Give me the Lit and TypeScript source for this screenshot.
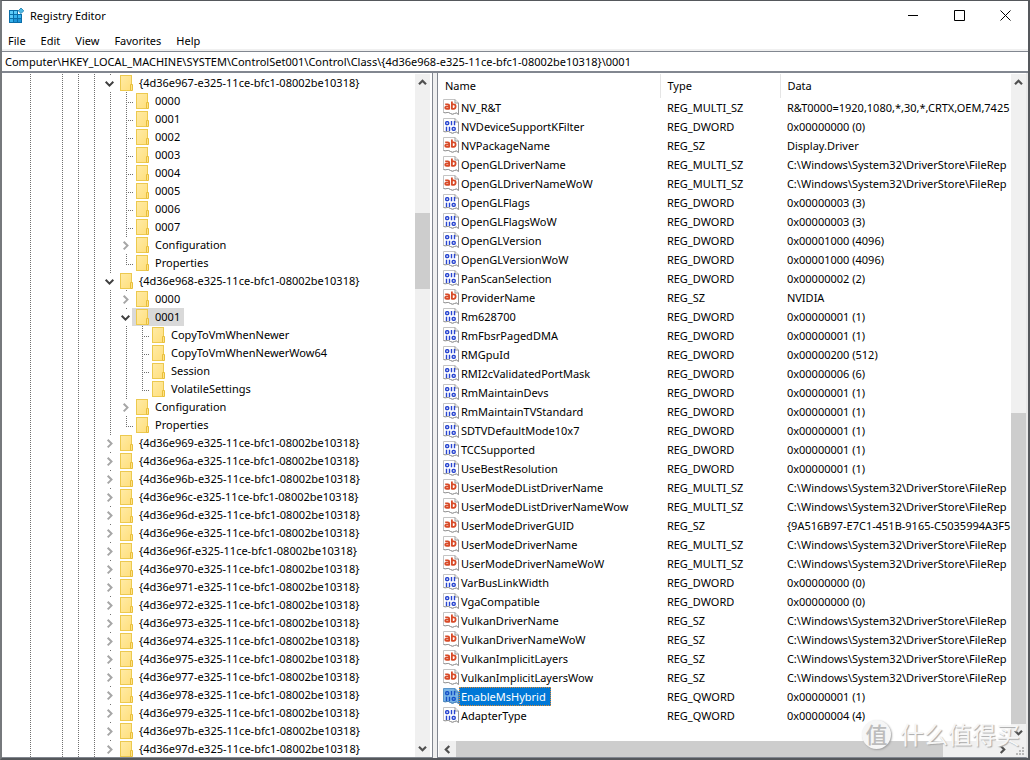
import { LitElement, html, css, svg, nothing } from "lit";
import { customElement, property } from "lit/decorators.js";

type Kind = "closed" | "open" | "leaf";
interface Key { name: string; depth: number; kind: Kind; last?: boolean; selected?: boolean; }
interface Value { name: string; type: string; data: string; selected?: boolean; }

const guid = (id: string) => `{4d36e${id}-e325-11ce-bfc1-08002be10318}`;
const top = (id: string, kind: Kind = "closed"): Key => ({ name: guid(id), depth: 0, kind });
const sub = (name: string, kind: Kind = "leaf", last = false): Key => ({ name, depth: 1, kind, last });

const KEYS: Key[] = [
  top("967", "open"),
  ...["0000", "0001", "0002", "0003", "0004", "0005", "0006", "0007"].map((n) => sub(n)),
  sub("Configuration", "closed"),
  sub("Properties", "leaf", true),
  top("968", "open"),
  sub("0000", "closed"),
  { ...sub("0001", "open"), selected: true },
  { name: "CopyToVmWhenNewer", depth: 2, kind: "leaf" },
  { name: "CopyToVmWhenNewerWow64", depth: 2, kind: "leaf" },
  { name: "Session", depth: 2, kind: "leaf" },
  { name: "VolatileSettings", depth: 2, kind: "leaf", last: true },
  sub("Configuration", "closed"),
  sub("Properties", "leaf", true),
  ...["969", "96a", "96b", "96c", "96d", "96e", "96f", "970", "971", "972", "973", "974", "975", "977", "978", "979", "97b", "97d"].map((id) => top(id)),
];

const PATH = "C:\\Windows\\System32\\DriverStore\\FileRep";
const dword = (name: string, data: string): Value => ({ name, type: "REG_DWORD", data });
const multi = (name: string, data = PATH): Value => ({ name, type: "REG_MULTI_SZ", data });
const text = (name: string, data = PATH): Value => ({ name, type: "REG_SZ", data });

const VALUES: Value[] = [
  multi("NV_R&T", "R&T0000=1920,1080,*,30,*,CRTX,OEM,7425"),
  dword("NVDeviceSupportKFilter", "0x00000000 (0)"),
  text("NVPackageName", "Display.Driver"),
  multi("OpenGLDriverName"),
  multi("OpenGLDriverNameWoW"),
  dword("OpenGLFlags", "0x00000003 (3)"),
  dword("OpenGLFlagsWoW", "0x00000003 (3)"),
  dword("OpenGLVersion", "0x00001000 (4096)"),
  dword("OpenGLVersionWoW", "0x00001000 (4096)"),
  dword("PanScanSelection", "0x00000002 (2)"),
  text("ProviderName", "NVIDIA"),
  dword("Rm628700", "0x00000001 (1)"),
  dword("RmFbsrPagedDMA", "0x00000001 (1)"),
  dword("RMGpuId", "0x00000200 (512)"),
  dword("RMI2cValidatedPortMask", "0x00000006 (6)"),
  dword("RmMaintainDevs", "0x00000001 (1)"),
  dword("RmMaintainTVStandard", "0x00000001 (1)"),
  dword("SDTVDefaultMode10x7", "0x00000001 (1)"),
  dword("TCCSupported", "0x00000001 (1)"),
  dword("UseBestResolution", "0x00000001 (1)"),
  multi("UserModeDListDriverName"),
  multi("UserModeDListDriverNameWow"),
  text("UserModeDriverGUID", "{9A516B97-E7C1-451B-9165-C5035994A3F5"),
  multi("UserModeDriverName"),
  multi("UserModeDriverNameWoW"),
  dword("VarBusLinkWidth", "0x00000000 (0)"),
  dword("VgaCompatible", "0x00000000 (0)"),
  text("VulkanDriverName"),
  text("VulkanDriverNameWoW"),
  text("VulkanImplicitLayers"),
  text("VulkanImplicitLayersWow"),
  { name: "EnableMsHybrid", type: "REG_QWORD", data: "0x00000001 (1)", selected: true },
  { name: "AdapterType", type: "REG_QWORD", data: "0x00000004 (4)" },
];

const reset = css`
  * { box-sizing: border-box; }
  button { appearance: none; border: 0; margin: 0; padding: 0; background: none; color: inherit; font: inherit; }
  svg { display: block; flex: none; }
`;

@customElement("reg-scrollbar")
class RegScrollbar extends LitElement {
  @property() axis = "vertical";
  @property({ type: Number }) before = 0;
  @property({ type: Number }) size = 1;
  @property({ type: Number }) after = 0;

  static styles = [reset, css`
    :host { display: flex; flex: none; background: #f0f0f0; color: #505050; }
    :host([axis="vertical"]) { flex-direction: column; width: 15px; }
    :host([axis="horizontal"]) { height: 16px; }
    button { flex: none; display: flex; align-items: center; justify-content: center; width: 17px; height: 17px; }
    :host([axis="vertical"]) button { width: 15px; }
    :host([axis="horizontal"]) button { height: 16px; }
    .thumb { background: #cdcdcd; }
    .gap, .thumb { flex-basis: 0; min-width: 0; min-height: 0; }
  `];

  private arrow(angle: number) {
    return html`<svg width="9" height="9" viewBox="0 0 9 9" aria-hidden="true">
      <path d="M1 6.3 4.5 2.8 8 6.3" fill="none" stroke="currentColor" stroke-width="2.2" transform="rotate(${angle} 4.5 4.5)"/></svg>`;
  }

  render() {
    const v = this.axis === "vertical";
    return html`
      <button aria-label=${v ? "Scroll up" : "Scroll left"}>${this.arrow(v ? 0 : -90)}</button>
      <div class="gap" style="flex-grow:${this.before}"></div>
      <div class="thumb" style="flex-grow:${this.size}"></div>
      <div class="gap" style="flex-grow:${this.after}"></div>
      <button aria-label=${v ? "Scroll down" : "Scroll right"}>${this.arrow(v ? 180 : 90)}</button>`;
  }
}

@customElement("reg-tree")
class RegTree extends LitElement {
  static styles = [reset, css`
    :host { display: block; overflow: hidden; padding: 1px 0 0 20px; background: #fff; }
    ul { list-style: none; margin: 0; padding: 0; }
    li { display: flex; height: 18px; }
    .cell { flex: none; width: 16px; height: 18px; }
    .label { display: flex; align-items: center; height: 18px; margin-left: -2px; padding: 0 4px 0 2px; white-space: nowrap; }
    .label span { padding-left: 5px; line-height: 18px; }
    .selected { background: #d9d9d9; }
  `];

  private cell(line: "none" | "full" | "half", stub = false, kind: Kind = "leaf") {
    return html`<svg class="cell" viewBox="0 0 16 18" shape-rendering="crispEdges" aria-hidden="true">
      ${line === "none" ? nothing : svg`<path d=${line === "full" ? "M8.5 0V18" : "M8.5 0V11"} stroke="#707070" stroke-dasharray="1 1"/>`}
      ${stub ? svg`<path d="M8 10.5H16" stroke="#707070" stroke-dasharray="1 1"/>` : nothing}
      ${kind === "leaf" ? nothing : svg`<rect x="2" y="2" width="12" height="15" fill="#fff"/>`}
      ${kind === "closed" ? svg`<path d="M5.7 5.8 9.5 9.6 5.7 13.4" fill="none" stroke="#a6a6a6" stroke-width="2" shape-rendering="auto"/>` : nothing}
      ${kind === "open" ? svg`<path d="M3.7 7.8 7.5 11.6 11.3 7.8" fill="none" stroke="#404040" stroke-width="2" shape-rendering="auto"/>` : nothing}
    </svg>`;
  }

  private folder() {
    return html`<svg width="16" height="18" viewBox="0 0 16 18" aria-hidden="true">
      <defs><linearGradient id="f" x2="1" y2="1"><stop stop-color="#ffeba6"/><stop offset="1" stop-color="#ffdf7c"/></linearGradient></defs>
      <rect x="2.5" y="1.5" width="11" height="15" fill="url(#f)" stroke="#ecc94f"/>
      <path d="M12.5 16.5V10.5H14.5V16.5Z" fill="#ffe28a" stroke="#e8bf3a"/></svg>`;
  }

  render() {
    return html`<ul role="tree" aria-label="Registry keys">${KEYS.map((k) => html`
      <li role="treeitem" aria-level=${k.depth + 1} aria-selected=${k.selected ? "true" : "false"}>
        ${this.cell("full")}${this.cell("none")}${this.cell("full")}${this.cell("full")}${this.cell("full")}
        ${Array.from({ length: k.depth }, () => this.cell("full"))}
        ${this.cell(k.last ? "half" : "full", k.kind === "leaf", k.kind)}
        <div class="label ${k.selected ? "selected" : ""}">${this.folder()}<span>${k.name}</span></div>
      </li>`)}</ul>`;
  }
}

@customElement("reg-values")
class RegValues extends LitElement {
  static styles = [reset, css`
    :host { display: block; overflow: hidden; background: #fff; padding: 1px 0 0 1px; }
    table { table-layout: fixed; width: 100%; border-collapse: collapse; }
    .name { width: 222px; }
    .type { width: 120px; }
    th { height: 24px; padding: 0 6px 2px; border-right: 1px solid #e5e5e5; font-weight: normal; text-align: left; }
    th:last-child { border-right: 0; }
    td { height: 19px; padding: 0 0 0 6px; line-height: 19px; white-space: nowrap; overflow: hidden; }
    td:first-child { padding-left: 4px; }
    .entry { display: flex; align-items: center; }
    .entry span { padding: 0 5px 0 2px; outline-offset: -1px; }
    .selected span { background: #0078d7; color: #fff; outline: 1px dotted #e08a30; }
  `];

  private icon(v: Value) {
    const page = v.selected ? "#78b4e6" : "#fff";
    const textual = v.type.endsWith("SZ");
    return html`<svg width="16" height="17" viewBox="0 0 16 17" aria-hidden="true">
      <path d="M.5.5H12L15.5 4V15.5Q13.5 13 11.5 14.5T7.5 14.5 4 13.5 .5 13.5Z" fill=${page} stroke=${v.selected ? "#5c96c8" : "#c4c4c4"}/>
      <path d="M12 .5V4H15.5V15.5Q13.5 13 11.5 14.5T7.5 14.5 4 13.5 .5 13.5" fill="none" stroke=${v.selected ? "#4c84b8" : "#989898"}/>
      ${textual
        ? svg`<g fill="none" stroke="#d84a27" stroke-width="1.8"><path d="M2.2 5.4H4.9Q6.2 5.4 6.2 6.7V10.6M6 7.6H3.6Q2.2 7.6 2.2 8.7T3.6 9.8H6M8.9 2.4V10.6M8.9 5.4H10.7Q12.6 5.4 12.6 7.6T10.7 9.8H8.9"/></g>`
        : svg`<g fill="none" stroke=${v.selected ? "#1450c8" : "#2845d0"} stroke-width="1.4"><rect x="2.7" y="3.7" width="3" height="2.8" rx="1"/><path d="M8.5 3V7.2M11.5 3V7.2M3.5 8.8V13M6.5 8.8V13"/><rect x="9.2" y="9.5" width="3" height="2.8" rx="1"/></g>`}
    </svg>`;
  }

  render() {
    return html`<table>
      <thead><tr><th class="name" scope="col">Name</th><th class="type" scope="col">Type</th><th scope="col">Data</th></tr></thead>
      <tbody>${VALUES.map((v) => html`<tr>
        <td><div class="entry ${v.selected ? "selected" : ""}">${this.icon(v)}<span>${v.name}</span></div></td>
        <td>${v.type}</td><td>${v.data}</td></tr>`)}</tbody>
    </table>`;
  }
}

@customElement("app-root")
class AppRoot extends LitElement {
  static styles = [reset, css`
    :host {
      display: flex; flex-direction: column; box-sizing: border-box; height: 100vh; overflow: hidden; position: relative;
      border: 1px solid #55585c; border-width: 1px 2px 2px; border-left-color: #76797c; background: #fff; color: #000;
      font: 11px "Noto Sans", "Open Sans", sans-serif;
    }
    header { display: flex; align-items: center; flex: none; height: 29px; padding-left: 6px; }
    h1 { flex: 1; margin: 0; padding-left: 6px; font: inherit; }
    .caption { width: 46px; height: 29px; display: flex; align-items: center; justify-content: center; }
    nav { display: flex; align-items: center; flex: none; height: 21px; gap: 15px; padding-left: 6px; }
    .address { flex: none; display: flex; border: 1px solid #828790; border-width: 1px 0 2px; box-shadow: 0 -2px #f0f0f0; }
    .address input { flex: 1; height: 19px; border: 0; padding: 0 3px; background: #fff; color: inherit; font: inherit; outline: none; }
    main { flex: 1; min-height: 0; display: flex; background: #f0f0f0; }
    .pane { display: flex; min-width: 0; background: #fff; border-bottom: 1px solid #828790; }
    .keys { flex: 0 0 42%; border-right: 1px solid #828790; padding-right: 2px; }
    .keys reg-tree { flex: 1; }
    .values { flex: 1; flex-direction: column; margin-left: 4px; border-left: 1px solid #828790; border-right: 2px solid #e8e8e8; }
    .view { flex: 1; min-height: 0; display: flex; }
    .view reg-values { flex: 1; min-width: 0; }
    reg-scrollbar { margin-top: 1px; }
    .foot { display: flex; flex: none; padding-left: 1px; }
    .foot reg-scrollbar { flex: 1; margin-top: 0; }
    .grip { width: 15px; background: #f0f0f0; display: flex; align-items: flex-end; justify-content: flex-end; padding: 1px; }
    .mark { position: absolute; right: 8px; bottom: 9px; display: flex; align-items: center; gap: 9px; pointer-events: none;
      color: #f6f6f6; font: 24px/30px "Noto Sans CJK SC", sans-serif; text-shadow: 1px 1px 1px #a8a8a8; }
    .seal { width: 29px; height: 29px; border-radius: 50%; background: #f6f6f6; box-shadow: 1px 1px 2px #a0a0a0;
      color: #bcbcbc; text-shadow: none; font-size: 22px; font-weight: 500; line-height: 27px; text-align: center; }
  `];

  render() {
    return html`
      <header>
        <svg width="16" height="16" viewBox="0 0 16 16" aria-hidden="true">
          <path d="M1 2H10V6H14V15H1Z" fill="#0b6ea8"/>
          <path d="M2 3H5V6H2ZM6 3H9V6H6ZM2 7H5V10H2Z" fill="#5ccbf8"/>
          <path d="M6 7H9V10H6ZM2 11H5V14H2ZM10 7H13V10H10Z" fill="#38b4ee"/>
          <path d="M6 11H9V14H6ZM10 11H13V14H10Z" fill="#1c94d8"/>
          <path d="M13 0 15.8 2.8 13 5.6 10.2 2.8Z" fill="#4cb8e4" stroke="#1a7cac" stroke-width=".8"/>
        </svg>
        <h1>Registry Editor</h1>
        <button class="caption" aria-label="Minimize"><svg width="10" height="10"><path d="M0 4.5H10" stroke="#000"/></svg></button>
        <button class="caption" aria-label="Maximize"><svg width="11" height="11"><path d="M.5.5H10.5V10.5H.5Z" fill="none" stroke="#000"/></svg></button>
        <button class="caption" aria-label="Close"><svg width="11" height="11"><path d="M.5.5 10.5 10.5M10.5.5.5 10.5" stroke="#000"/></svg></button>
      </header>
      <nav aria-label="Menu">${["File", "Edit", "View", "Favorites", "Help"].map((m) => html`<button>${m}</button>`)}</nav>
      <div class="address"><input aria-label="Address" value="Computer\\HKEY_LOCAL_MACHINE\\SYSTEM\\ControlSet001\\Control\\Class\\{4d36e968-e325-11ce-bfc1-08002be10318}\\0001"></div>
      <main>
        <section class="pane keys">
          <reg-tree></reg-tree>
          <reg-scrollbar axis="vertical" before="122" size="76" after="452"></reg-scrollbar>
        </section>
        <section class="pane values">
          <div class="view">
            <reg-values></reg-values>
            <reg-scrollbar axis="vertical" before="321" size="311" after="0"></reg-scrollbar>
          </div>
          <div class="foot">
            <reg-scrollbar axis="horizontal" before="0" size="487" after="51"></reg-scrollbar>
            <div class="grip"><svg width="9" height="9" fill="#b8b8b8"><path d="M6 0h2v2H6zM3 3h2v2H3zM6 3h2v2H6zM0 6h2v2H0zM3 6h2v2H3zM6 6h2v2H6z"/></svg></div>
          </div>
        </section>
      </main>
      <div class="mark"><span class="seal">值</span><span>什么值得买</span></div>`;
  }
}
